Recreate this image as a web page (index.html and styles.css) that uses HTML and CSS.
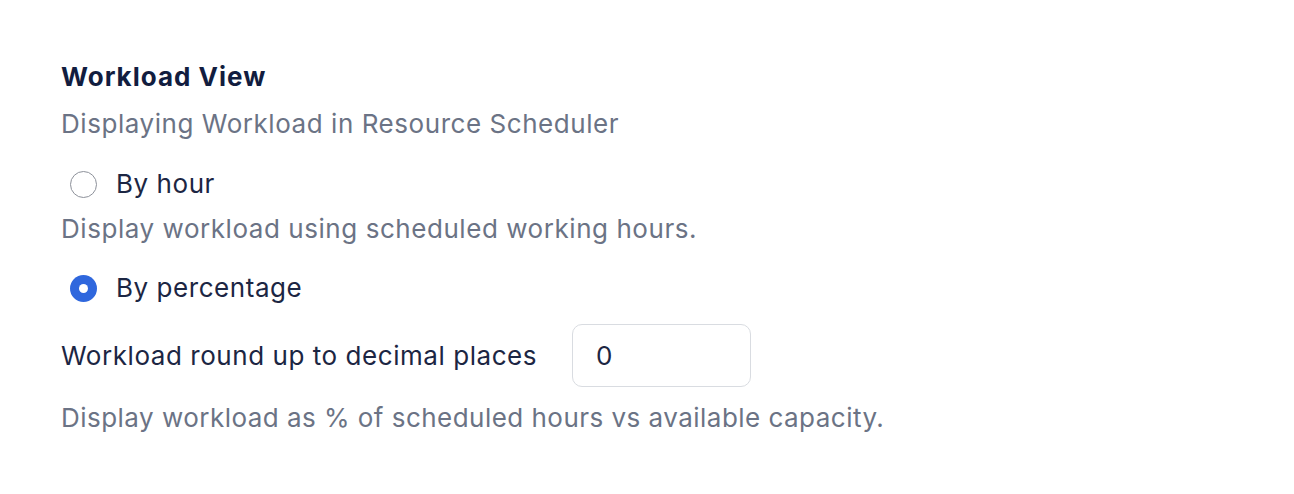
FILE: index.html
```html
<!DOCTYPE html>
<html>
<head>
<meta charset="utf-8">
<link rel="stylesheet" href="styles.css">
</head>
<body>
<section class="panel">
  <h2 class="title">Workload View</h2>
  <p class="desc">Displaying Workload in Resource Scheduler</p>
  <label class="option option-first">
    <span class="radio"></span>
    <span class="option-label">By hour</span>
  </label>
  <p class="desc">Display workload using scheduled working hours.</p>
  <label class="option option-second">
    <span class="radio radio-checked"></span>
    <span class="option-label">By percentage</span>
  </label>
  <div class="field">
    <span class="field-label">Workload round up to decimal places</span>
    <div class="input">0</div>
  </div>
  <p class="desc desc-last">Display workload as % of scheduled hours vs available capacity.</p>
</section>
</body>
</html>
```
FILE: styles.css
```css
* { box-sizing: border-box; }
html, body { margin: 0; padding: 0; background: #ffffff; }
body {
  font-family: Inter, "Noto Sans", "Liberation Sans", sans-serif;
  color: #1c2643;
  letter-spacing: 0.55px;
}
.panel {
  padding: 60px 0 0 61px;
  display: flex;
  flex-direction: column;
  align-items: flex-start;
}
.title {
  margin: 0;
  font-size: 26px;
  line-height: 34px;
  font-weight: 700;
  color: #121d3f;
  letter-spacing: 1px;
}
.desc {
  margin: 15px 0 0 0;
  font-size: 26px;
  line-height: 30px;
  color: #6b7385;
}
.option {
  display: flex;
  align-items: center;
  gap: 19px;
  margin-left: 9px;
  height: 36px;
}
.option-first { margin-top: 27px; }
.option-second { margin-top: 26px; }
.option-label {
  font-size: 26px;
  line-height: 30px;
  color: #1c2643;
}
.radio {
  width: 27px;
  height: 27px;
  border-radius: 50%;
  border: 1.5px solid #8d919a;
  background: #fff;
  display: flex;
  align-items: center;
  justify-content: center;
}
.radio-checked {
  border: none;
  background: #2f67dd;
}
.radio-checked::after {
  content: "";
  width: 9px;
  height: 9px;
  border-radius: 50%;
  background: #fff;
}
.option + .desc { margin-top: 12px; }
.field {
  display: flex;
  align-items: center;
  gap: 35px;
  margin-top: 18px;
}
.field-label {
  font-size: 26px;
  line-height: 30px;
  color: #1c2643;
}
.input {
  width: 179px;
  height: 63px;
  border: 1.5px solid #d9dce1;
  border-radius: 10px;
  padding-left: 23px;
  display: flex;
  align-items: center;
  font-size: 26px;
  color: #1c2643;
}
.desc-last { margin-top: 16px; letter-spacing: 0.47px; }
```
